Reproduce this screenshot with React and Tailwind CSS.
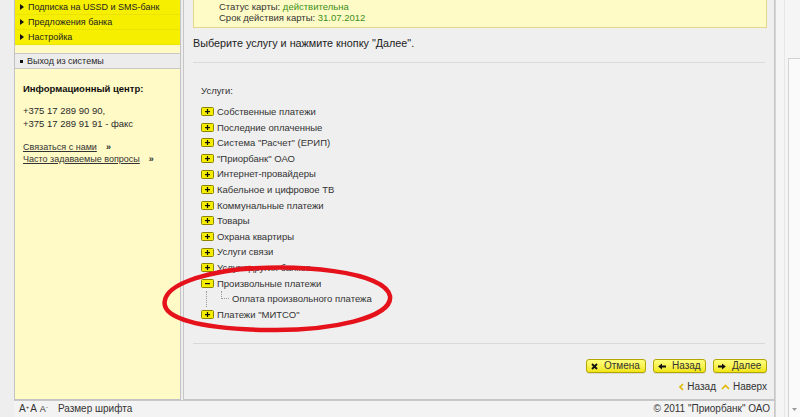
import React from 'react';

const menu = ['Подписка на USSD и SMS-банк', 'Предложения банка', 'Настройка'];

const services = [
  'Собственные платежи',
  'Последние оплаченные',
  'Система "Расчет" (ЕРИП)',
  '"Приорбанк" ОАО',
  'Интернет-провайдеры',
  'Кабельное и цифровое ТВ',
  'Коммунальные платежи',
  'Товары',
  'Охрана квартиры',
  'Услуги связи',
  'Услуги других банков',
];

const TreeIcon = ({ open }) => (
  <svg width="13" height="9" viewBox="0 0 13 9" className="shrink-0">
    <rect x="0.5" y="0.5" width="12" height="8" rx="1" fill="#f6ee00" stroke="#8c8400" />
    <rect x="4" y="4" width="5" height="1.2" fill="#111" />
    {!open && <rect x="5.9" y="2" width="1.2" height="5" fill="#111" />}
  </svg>
);

const TreeRow = ({ label, open }) => (
  <div className="h-[15.6px] flex items-center gap-[3px]">
    <TreeIcon open={open} />
    <span>{label}</span>
  </div>
);

const Btn = ({ icon, label, w }) => (
  <div
    className={`${w} h-[14px] flex items-center gap-[6px] pl-[4px] rounded-[3px] border border-[#b3a600] bg-gradient-to-b from-[#ffff7a] to-[#f2e600] shadow-[0_1px_0_#d8d8d8]`}
  >
    {icon}
    <span className="text-[#333] text-[10px]">{label}</span>
  </div>
);

const CrossIcon = () => (
  <svg width="7" height="7" viewBox="0 0 7 7">
    <path d="M1 1L6 6M6 1L1 6" stroke="#111" strokeWidth="1.8" />
  </svg>
);

const ArrowIcon = ({ left }) => (
  <svg width="8" height="7" viewBox="0 0 8 7" style={{ transform: left ? 'scaleX(-1)' : undefined }}>
    <path d="M0 2.6H4V0.5L7.8 3.5L4 6.5V4.4H0Z" fill="#111" />
  </svg>
);

export default function App() {
  return (
    <div className="relative w-[800px] h-[417px] overflow-hidden flex bg-[#eeeeee] font-['Liberation_Sans',Arial,sans-serif] text-[9.5px] text-[#2a2a2a] leading-none">
      <div className="w-[14px] bg-[#eeeeee]" />

      <div className="w-[761px] flex flex-col">
        <div className="h-[400px] flex">
          {/* sidebar */}
          <aside className="w-[167px] flex flex-col border-x border-b border-[#c2c2c2] bg-[#fffac6] text-[9px]">
            {menu.map((m) => (
              <div key={m} className="h-[15px] flex items-center gap-[4px] pl-[5px] bg-[#f6ef00] border-b border-[#ece400]">
                <svg width="4" height="6" viewBox="0 0 4 6">
                  <path d="M0 0L4 3L0 6Z" fill="#111" />
                </svg>
                <span className="text-[#222]">{m}</span>
              </div>
            ))}
            <div className="h-[8px]" />
            <div className="h-[16px] flex items-center gap-[4px] pl-[5px] bg-[#ececec] border-y border-[#c8c8c8]">
              <span className="w-[3px] h-[3px] bg-[#111]" />
              <span>Выход из системы</span>
            </div>
            <div className="flex-1 pl-[8px] pt-[13px]">
              <div className="h-[13px] flex items-center font-bold text-[9.5px] text-[#111]">Информационный центр:</div>
              <div className="mt-[9px] leading-[13px] text-[9.5px]">
                <div>+375 17 289 90 90,</div>
                <div>+375 17 289 91 91 - факс</div>
              </div>
              <div className="mt-[11px] leading-[12px]">
                <div className="flex items-center gap-[9px]">
                  <span className="underline text-[#333]">Связаться с нами</span>
                  <span className="font-bold">&raquo;</span>
                </div>
                <div className="flex items-center gap-[9px]">
                  <span className="underline text-[#333]">Часто задаваемые вопросы</span>
                  <span className="font-bold">&raquo;</span>
                </div>
              </div>
            </div>
          </aside>

          <div className="w-[2px]" />

          {/* main panel */}
          <main className="w-[592px] flex flex-col border-x border-b border-[#c6c6c6] bg-[#efefef]">
            <div className="ml-[9px] mr-[7px] h-[28px] border-x border-b border-[#e2d98e] bg-[#fffbc6] pl-[25px] pt-[1px] leading-[11px] text-[#333]">
              <div>
                Статус карты: <span className="text-[#3c8f1a]">действительна</span>
              </div>
              <div>
                Срок действия карты: <span className="text-[#3c8f1a]">31.07.2012</span>
              </div>
            </div>

            <div className="ml-[9px] mt-[8px] h-[14px] flex items-center text-[10.8px] text-[#222]">
              Выберите услугу и нажмите кнопку "Далее".
            </div>

            <div className="ml-[9px] mr-[9px] mt-[12px] border-t border-[#dadada]" />

            <div className="pl-[17px] text-[#333]">
              <div className="mt-[21px] h-[14px] flex items-center">Услуги:</div>
              <div className="mt-[6px]">
                {services.map((s) => (
                  <TreeRow key={s} label={s} />
                ))}
                <TreeRow label="Произвольные платежи" open />
                <div className="h-[15.6px] flex">
                  <div className="ml-[5px] border-l border-dotted border-[#999]" />
                  <div className="ml-[14px] flex flex-col w-[8px]">
                    <div className="h-[8px] border-l border-b border-dotted border-[#999]" />
                  </div>
                  <div className="ml-[3px] flex items-center">Оплата произвольного платежа</div>
                </div>
                <TreeRow label='Платежи "МИТСО"' />
              </div>
            </div>

            <div className="ml-[9px] mr-[9px] mt-[21px] border-t border-[#d8d8d8]" />

            <div className="mt-[15px] mr-[7px] flex justify-end gap-[7px]">
              <Btn w="w-[60px]" icon={<CrossIcon />} label="Отмена" />
              <Btn w="w-[53px]" icon={<ArrowIcon left />} label="Назад" />
              <Btn w="w-[54px]" icon={<ArrowIcon />} label="Далее" />
            </div>

            <div className="mt-[8px] mr-[7px] h-[12px] flex justify-end items-center gap-[3px] text-[#333] text-[10px]">
              <svg width="5" height="8" viewBox="0 0 5 8">
                <path d="M4 1L1 4L4 7" stroke="#e2b800" strokeWidth="1.6" fill="none" />
              </svg>
              <span>Назад</span>
              <svg width="9" height="6" viewBox="0 0 9 6" className="ml-[2px]">
                <path d="M1 5L4.5 1.5L8 5" stroke="#e2b800" strokeWidth="1.6" fill="none" />
              </svg>
              <span>Наверх</span>
            </div>
          </main>
        </div>

        {/* footer */}
        <footer className="h-[17px] flex items-center justify-between border-t border-r border-[#c8c8c8] bg-[#f3f3f3] pl-[5px] pr-[4px] text-[#333] text-[10px]">
          <div className="flex items-center">
            <span>A<sup className="text-[6px]">+</sup></span>
            <span className="ml-[1px]">A</span>
            <span className="ml-[3px] text-[9px]">A<sup className="text-[6px]">-</sup></span>
            <span className="ml-[10px]">Размер шрифта</span>
          </div>
          <span>© 2011 "Приорбанк" ОАО</span>
        </footer>
      </div>

      {/* right strip */}
      <div className="w-[25px] flex bg-[#f5f5f5] border-l border-[#d4d4d4]">
        <div className="ml-[8px] w-[1px] bg-[#e6e6e6]" />
        <div className="ml-[3px] mt-[58px] flex-1 flex flex-col justify-end items-center border-l border-t border-[#d2d2d2] bg-[#fafafa] pb-[6px]">
          <svg width="5" height="3" viewBox="0 0 5 3">
            <path d="M0 0H5L2.5 3Z" fill="#999" />
          </svg>
        </div>
      </div>

      {/* red marker oval */}
      <svg className="absolute left-0 top-0 pointer-events-none" width="800" height="417" viewBox="0 0 800 417">
        <path
          d="M225 271 C 300 262, 385 272, 390 296 C 393 318, 330 331, 268 330 C 200 329, 160 318, 165 300 C 168 285, 200 273, 250 268"
          stroke="#e5121b"
          strokeWidth="4.5"
          fill="none"
          strokeLinecap="round"
        />
      </svg>
    </div>
  );
}
